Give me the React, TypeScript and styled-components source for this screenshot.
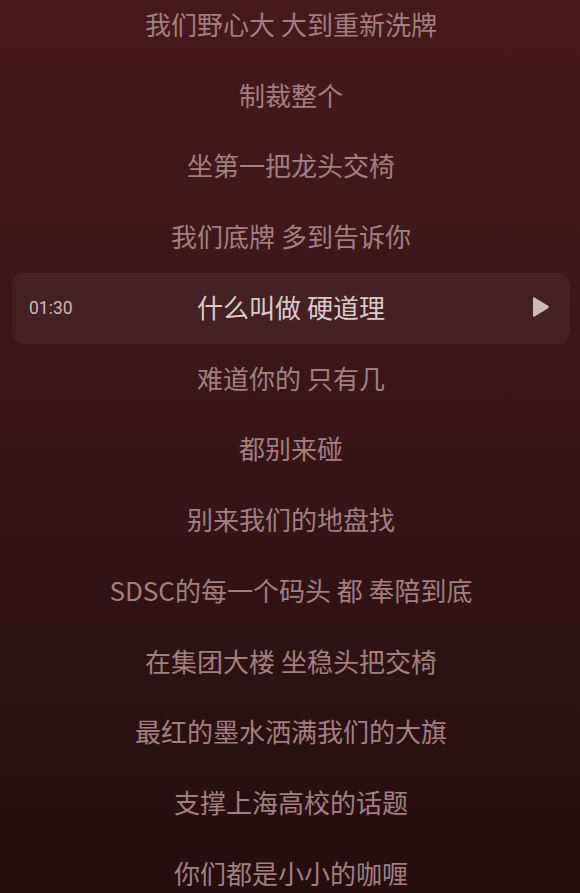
import React from "react";
import styled, { createGlobalStyle } from "styled-components";

const GlobalStyle = createGlobalStyle`
  html, body {
    margin: 0;
    padding: 0;
    background: #2a0f11;
  }
  body {
    font-family: Roboto, "Noto Sans CJK SC", sans-serif;
  }
`;

const SPage = styled.div`
  width: 580px;
  height: 893px;
  overflow: hidden;
  background: linear-gradient(180deg, #451a1c 0%, #38161a 45%, #250d10 100%);
`;

const SList = styled.ul`
  list-style: none;
  margin: -10px 0 0;
  padding: 0 10px 0 12px;
  display: flex;
  flex-direction: column;
`;

const SLine = styled.li<{ $active?: boolean }>`
  height: 70.75px;
  display: grid;
  grid-template-columns: 90px 1fr 90px;
  align-items: center;
  border-radius: 13px;
  background: ${(p) => (p.$active ? "rgba(255, 255, 255, 0.045)" : "transparent")};
`;

const SLyric = styled.span<{ $active?: boolean }>`
  grid-column: 2;
  text-align: center;
  padding-bottom: 4px;
  font-family: "Noto Sans CJK SC", Roboto, sans-serif;
  font-size: 26px;
  white-space: nowrap;
  color: ${(p) => (p.$active ? "#dccaca" : "#a27f80")};
`;

const STime = styled.span`
  grid-column: 1;
  padding-left: 17px;
  padding-bottom: 1px;
  font-family: Roboto, sans-serif;
  font-size: 17.5px;
  color: #cdb7b7;
`;

const SPlay = styled.button`
  grid-column: 3;
  justify-self: end;
  margin-right: 20px;
  margin-bottom: 2px;
  border: 0;
  background: none;
  padding: 0;
  display: flex;
`;

const lyrics = [
  "我们野心大 大到重新洗牌",
  "制裁整个",
  "坐第一把龙头交椅",
  "我们底牌 多到告诉你",
  "什么叫做 硬道理",
  "难道你的 只有几",
  "都别来碰",
  "别来我们的地盘找",
  "SDSC的每一个码头 都 奉陪到底",
  "在集团大楼 坐稳头把交椅",
  "最红的墨水洒满我们的大旗",
  "支撑上海高校的话题",
  "你们都是小小的咖喱",
];

const activeIndex = 4;

function PlayIcon() {
  return (
    <svg width="18" height="22" viewBox="0 0 18 22">
      <path
        d="M2.6 1.4 Q1 0.6 1 2.5 L1 19.5 Q1 21.4 2.6 20.6 L16.2 12.3 Q17.6 11 16.2 9.7 Z"
        fill="#cdb7b7"
      />
    </svg>
  );
}

function App() {
  return (
    <SPage>
      <GlobalStyle />
      <SList>
        {lyrics.map((text, i) => {
          const active = i === activeIndex;
          return (
            <SLine key={i} $active={active}>
              {active && <STime>01:30</STime>}
              <SLyric $active={active}>{text}</SLyric>
              {active && (
                <SPlay aria-label="play">
                  <PlayIcon />
                </SPlay>
              )}
            </SLine>
          );
        })}
      </SList>
    </SPage>
  );
}

export default App;
